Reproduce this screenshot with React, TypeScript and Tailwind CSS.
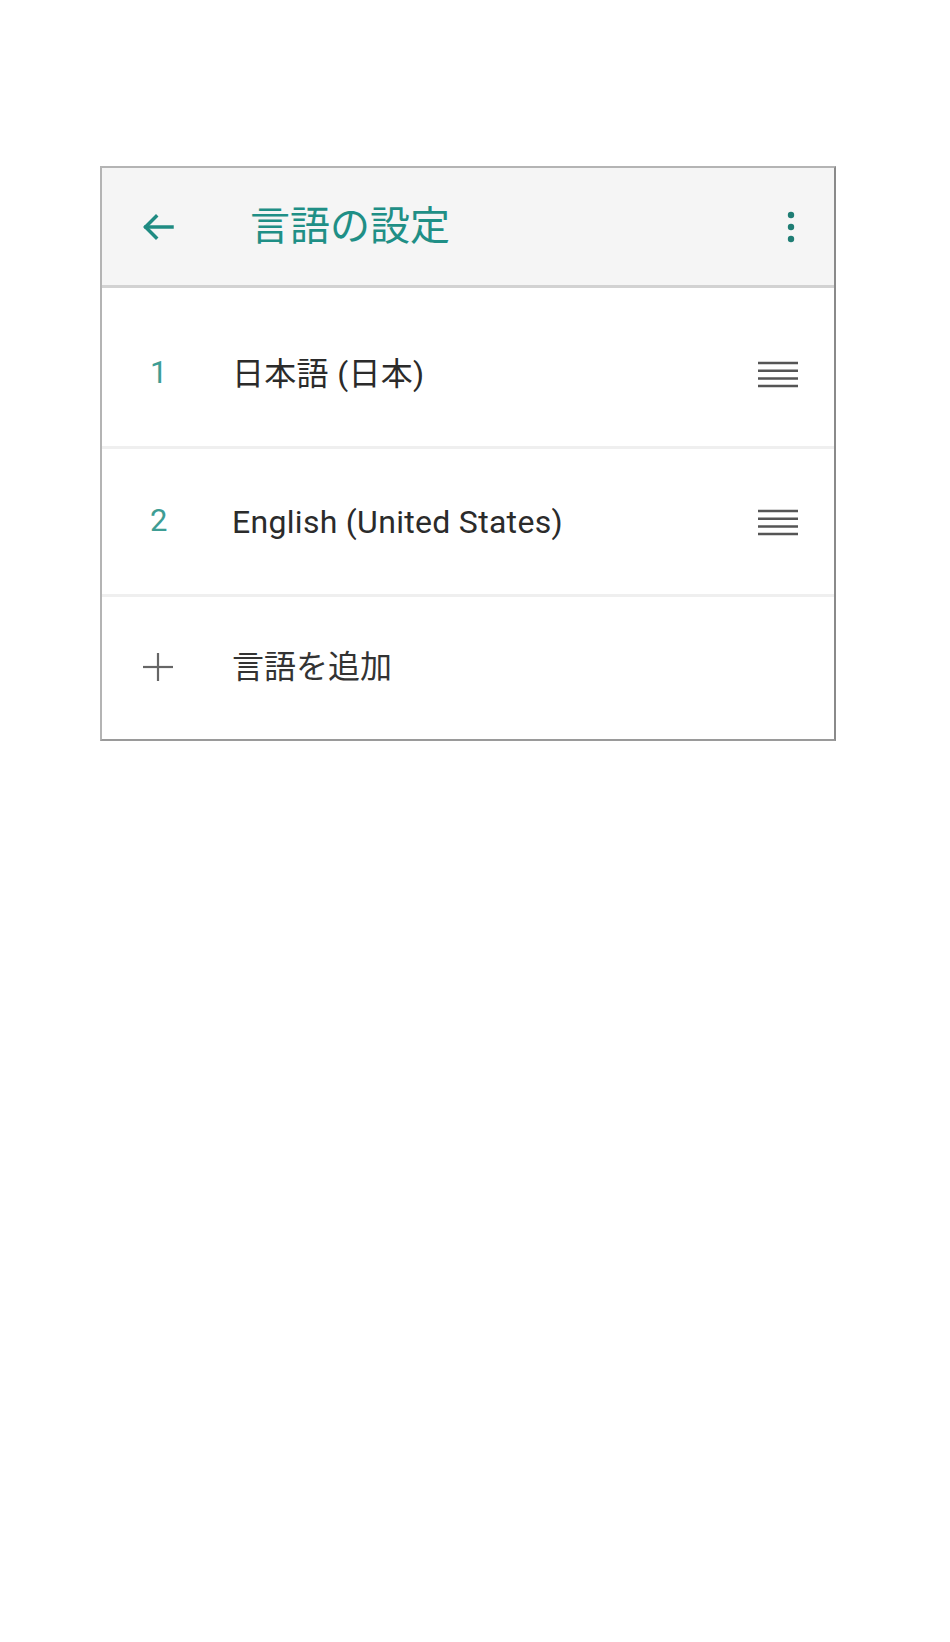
const font = { fontFamily: 'Roboto, "Noto Sans CJK JP", sans-serif' };

const BackArrow = () => (
  <svg width="32" height="28" viewBox="0 0 32 28" fill="none" stroke="#1f8b82" strokeWidth="3.5" strokeLinecap="square">
    <path d="M4 14H30" />
    <path d="M14 3.5L3.5 14L14 24.5" />
  </svg>
);

const MoreDots = () => (
  <svg width="10" height="32" viewBox="0 0 10 32" fill="#1f7d74">
    <circle cx="5" cy="4" r="3.2" />
    <circle cx="5" cy="16" r="3.2" />
    <circle cx="5" cy="28" r="3.2" />
  </svg>
);

const DragHandle = () => (
  <svg width="40" height="28" viewBox="0 0 40 28" stroke="#555" strokeWidth="2.5">
    <path d="M0 3H40" />
    <path d="M0 10.7H40" />
    <path d="M0 18.4H40" />
    <path d="M0 26H40" />
  </svg>
);

const Plus = () => (
  <svg width="30" height="28" viewBox="0 0 30 28" stroke="#666" strokeWidth="2.2">
    <path d="M0 14H30" />
    <path d="M15 0V28" />
  </svg>
);

const languages = [
  { n: "1", name: "日本語 (日本)" },
  { n: "2", name: "English (United States)" },
];

export default function App() {
  return (
    <div className="min-h-screen bg-white pt-[166px] pl-[100px]" style={font}>
      <div className="w-[736px] h-[575px] border-2 border-[#b4b4b4] border-r-[#8a8a8a] border-b-[#9a9a9a] bg-white overflow-hidden">
        <div className="h-[120px] bg-[#f5f5f5] border-b-[3px] border-[#d2d2d2] flex items-center pl-[40px] pr-[38px]">
          <BackArrow />
          <h1 className="ml-[76px] text-[40px] text-[#1f8f86] leading-none">言語の設定</h1>
          <div className="ml-auto">
            <MoreDots />
          </div>
        </div>
        <div className="pt-[13px]">
          {languages.map((l) => (
            <div key={l.n} className="h-[148px] border-b-[3px] border-[#efefef] flex items-center pl-[48px] pr-[36px]">
              <span className="w-[82px] text-[31px] text-[#3e9d94]">{l.n}</span>
              <span className="text-[32px] text-[#2b2b2b] tracking-[0.3px]">{l.name}</span>
              <div className="ml-auto">
                <DragHandle />
              </div>
            </div>
          ))}
          <div className="h-[140px] flex items-center pl-[41px]">
            <Plus />
            <span className="ml-[59px] text-[32px] text-[#333]">言語を追加</span>
          </div>
        </div>
      </div>
    </div>
  );
}
